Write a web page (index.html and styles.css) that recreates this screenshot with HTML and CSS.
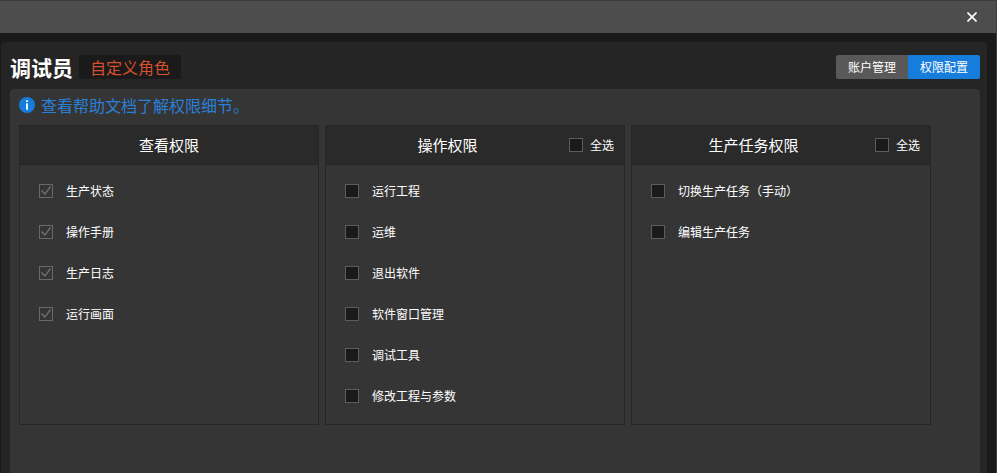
FILE: index.html
```html
<!DOCTYPE html>
<html lang="zh-CN">
<head>
    <meta charset="UTF-8">
    <meta name="viewport" content="width=device-width, initial-scale=1.0">
    <title>权限配置</title>
    <link rel="stylesheet" href="styles.css">
</head>
<body>
    <div class="titlebar">
        <button class="close" type="button" aria-label="关闭">
            <svg width="10" height="10" viewBox="0 0 10 10"><path d="M0.5 0.5 L9.5 9.5 M9.5 0.5 L0.5 9.5" stroke="#fff" stroke-width="1.6" fill="none"/></svg>
        </button>
    </div>

    <main class="panel">
        <header class="panel-header">
            <h1>调试员</h1>
            <span class="tag">自定义角色</span>
            <div class="tabs">
                <button class="tab" type="button">账户管理</button>
                <button class="tab active" type="button">权限配置</button>
            </div>
        </header>

        <div class="content">
            <div class="help">
                <svg width="16" height="16" viewBox="0 0 16 16"><circle cx="8" cy="8" r="8" fill="#177ddc"/><path d="M7.1 3.2h1.8v1.8H7.1z M7.1 6.2h1.8V12.8H7.1z" fill="#fff"/></svg>
                <a href="#help">查看帮助文档了解权限细节。</a>
            </div>

            <div class="cards">
                <section class="card">
                    <div class="card-header">
                        <h2>查看权限</h2>
                    </div>
                    <div class="card-body">
                        <label class="item"><input type="checkbox" checked disabled>生产状态</label>
                        <label class="item"><input type="checkbox" checked disabled>操作手册</label>
                        <label class="item"><input type="checkbox" checked disabled>生产日志</label>
                        <label class="item"><input type="checkbox" checked disabled>运行画面</label>
                    </div>
                </section>

                <section class="card">
                    <div class="card-header">
                        <h2>操作权限</h2>
                        <label class="select-all"><input type="checkbox">全选</label>
                    </div>
                    <div class="card-body">
                        <label class="item"><input type="checkbox">运行工程</label>
                        <label class="item"><input type="checkbox">运维</label>
                        <label class="item"><input type="checkbox">退出软件</label>
                        <label class="item"><input type="checkbox">软件窗口管理</label>
                        <label class="item"><input type="checkbox">调试工具</label>
                        <label class="item"><input type="checkbox">修改工程与参数</label>
                    </div>
                </section>

                <section class="card">
                    <div class="card-header">
                        <h2>生产任务权限</h2>
                        <label class="select-all"><input type="checkbox">全选</label>
                    </div>
                    <div class="card-body">
                        <label class="item"><input type="checkbox">切换生产任务（手动）</label>
                        <label class="item"><input type="checkbox">编辑生产任务</label>
                    </div>
                </section>
            </div>
        </div>
    </main>
</body>
</html>
```

FILE: styles.css
```css
* {
    box-sizing: border-box;
}

body {
    margin: 0;
    min-height: 100vh;
    display: flex;
    flex-direction: column;
    background-color: #1a1a1a;
    border-top: 1px solid #3a3b3e;
    border-right: 1px solid #404040;
    color: #fff;
    font-family: "Noto Sans CJK SC", sans-serif;
    font-size: 12px;
    line-height: 18px;
}

button {
    border: 0;
    padding: 0;
    color: inherit;
    font: inherit;
    cursor: pointer;
}

.titlebar {
    display: flex;
    justify-content: flex-end;
    height: 32px;
    padding-right: 8px;
    background-color: #4d4d4d;
}

.close {
    display: flex;
    align-items: center;
    justify-content: center;
    width: 32px;
    background: none;
}

.panel {
    flex: 1;
    display: flex;
    flex-direction: column;
    margin: 9px 9px 0 1px;
    padding: 13px 7px 0 9px;
    background-color: #252525;
    border-radius: 4px 4px 0 0;
}

.panel-header {
    display: flex;
    align-items: center;
    height: 24px;
    margin-bottom: 10px;
}

h1 {
    margin: 0 6px 0 0;
    font-size: 21px;
    line-height: 24px;
}

.tag {
    padding: 0 11px;
    background-color: #1a1a1a;
    border-radius: 2px;
    color: #d5502f;
    font-size: 16px;
    line-height: 24px;
}

.tabs {
    display: flex;
    margin-left: auto;
    border-radius: 2px;
    overflow: hidden;
}

.tab {
    height: 24px;
    padding: 0 12px;
    background-color: #595959;
}

.tab.active {
    background-color: #177ddc;
}

.content {
    flex: 1;
    padding: 4px 9px 9px;
    background-color: #353535;
    border-radius: 4px 4px 0 0;
}

.help {
    display: flex;
    align-items: center;
    gap: 6px;
    height: 24px;
    margin-bottom: 8px;
}

.help a {
    color: #2b7fd6;
    font-size: 16px;
    line-height: 24px;
    text-decoration: none;
}

.cards {
    display: flex;
    flex-wrap: wrap;
    gap: 6px;
}

.card {
    width: 300px;
    min-height: 300px;
    border: 1px solid #262626;
}

.card-header {
    display: flex;
    align-items: center;
    height: 39px;
    background-color: #2a2a2a;
    border-bottom: 1px solid #262626;
}

h2 {
    flex: 1;
    margin: 0;
    font-size: 15px;
    font-weight: normal;
    line-height: 24px;
    text-align: center;
}

.select-all {
    display: flex;
    align-items: center;
    gap: 7px;
    margin-right: 10px;
}

.card-body {
    display: flex;
    flex-direction: column;
    gap: 23px;
    padding: 17px 19px;
}

.item {
    display: flex;
    align-items: center;
    gap: 13px;
}

input[type="checkbox"] {
    appearance: none;
    display: grid;
    place-content: center;
    width: 14px;
    height: 14px;
    margin: 0;
    background-color: #1a1a1a;
    border: 1px solid #5c5c5c;
}

input[type="checkbox"]:disabled {
    background-color: transparent;
    border-color: #696969;
}

input[type="checkbox"]:checked::before {
    content: "";
    width: 12px;
    height: 12px;
    background-color: #737373;
    clip-path: polygon(1px 6px, 2px 5px, 5px 8px, 10px 1px, 11px 2px, 5px 10px);
}
```
